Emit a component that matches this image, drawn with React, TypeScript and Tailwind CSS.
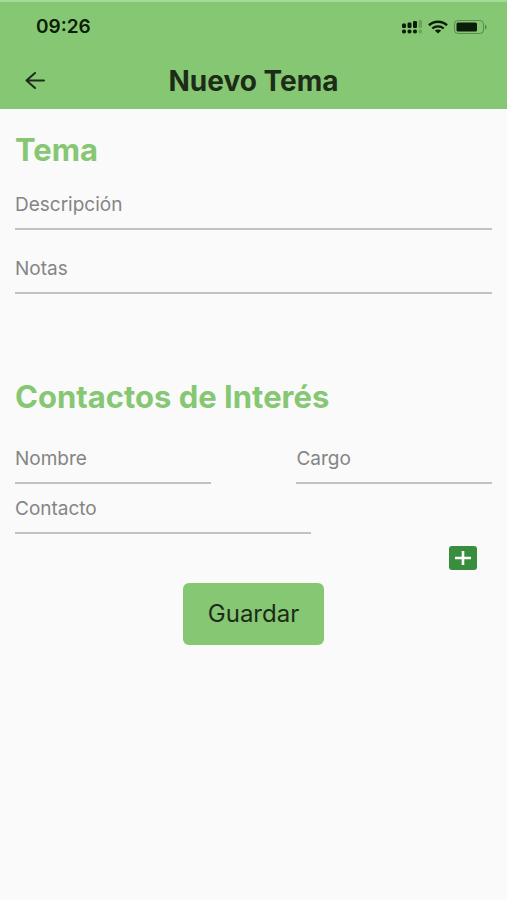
import React from "react";

type FieldProps = {
  name: string;
  label: string;
  className?: string;
};

function Field({ name, label, className = "" }: FieldProps) {
  return (
    <input
      id={name}
      name={name}
      type="text"
      aria-label={label}
      placeholder={label}
      className={`block h-[50px] min-w-0 rounded-none border-b-2 border-[#c2c2c2] bg-transparent text-[19px] text-[#222] outline-none placeholder:text-[#858585] focus:border-[#388e3c] ${className}`}
    />
  );
}

function SignalIcon() {
  return (
    <svg width="20" height="14" viewBox="0 0 20 14" fill="#0b1c08" aria-hidden="true">
      <rect x="0" y="3.500" width="4" height="4.500" rx="1.200" />
      <rect x="5.500" y="2.500" width="4" height="5.500" rx="1.200" />
      <rect x="11" y="1" width="4" height="7" rx="1.200" />
      <rect x="0" y="9.500" width="4" height="4" rx="1.800" />
      <rect x="5.500" y="9.500" width="4" height="4" rx="1.800" />
      <rect x="11" y="9.500" width="4" height="4" rx="1.800" />
      <g opacity="0.2">
        <rect x="16.500" y="0" width="3.500" height="8" rx="1" />
        <rect x="16.500" y="9.500" width="3.500" height="4" rx="1.500" />
      </g>
    </svg>
  );
}

function WifiIcon() {
  return (
    <svg width="20" height="14" viewBox="0 0 20 14" fill="none" stroke="#0b1c08" aria-hidden="true">
      <path d="M1 5.200C6 .6 14 .6 19 5.200" strokeWidth="2.600" />
      <path d="M4.300 8.500c3.200-2.900 8.200-2.900 11.400 0" strokeWidth="2.300" />
      <path d="M6.800 10.600c1.800-1.500 4.600-1.500 6.400 0L10 13.600z" fill="#0b1c08" stroke="none" />
    </svg>
  );
}

function BatteryIcon() {
  return (
    <svg width="33" height="14" viewBox="0 0 33 14" aria-hidden="true">
      <rect x="0.500" y="0.500" width="29" height="13" rx="3.500" fill="none" stroke="#0b1c08" strokeOpacity="0.35" />
      <rect x="2.500" y="2.500" width="20.500" height="9" rx="1.500" fill="#0b1c08" />
      <path d="M31 4.500c2 .8 2 4.200 0 5z" fill="#0b1c08" fillOpacity="0.4" />
    </svg>
  );
}

export default function App() {
  return (
    <div className="min-h-screen bg-[#fafafa] font-['Inter','Liberation_Sans',sans-serif] text-[#1d2b19]">
      <header className="border-t-2 border-[#a5dc95] bg-[#86c773]">
        <div className="flex h-[50px] items-center justify-between pr-5 pl-9">
          <time className="text-[19px] font-semibold text-[#0b1c08]">09:26</time>
          <div className="flex items-center gap-[6px]">
            <SignalIcon />
            <WifiIcon />
            <BatteryIcon />
          </div>
        </div>
        <div className="grid h-[57px] grid-cols-[40px_1fr_40px] items-center px-[15px]">
          <button type="button" aria-label="Volver" className="flex size-10 items-center justify-center">
            <svg width="20" height="18" viewBox="0 0 20 18" fill="none" stroke="#1d2b19" strokeWidth="2" strokeLinecap="round" strokeLinejoin="round" aria-hidden="true">
              <path d="M19 8.500H1.500M10 1L1.500 8.500l8.500 7.500" />
            </svg>
          </button>
          <h1 className="text-center text-[28px] leading-8 font-bold">Nuevo Tema</h1>
        </div>
      </header>

      <form className="px-[15px] pt-[23px]" onSubmit={(event) => event.preventDefault()}>
        <section>
          <h2 className="text-[31px] leading-9 font-bold text-[#86c773]">Tema</h2>
          <Field name="descripcion" label="Descripción" className="mt-3 w-full" />
          <Field name="notas" label="Notas" className="mt-[14px] w-full" />
        </section>

        <section className="mt-[85px]">
          <h2 className="text-[31px] leading-9 font-bold text-[#86c773]">Contactos de Interés</h2>
          <div className="mt-[19px] flex justify-between">
            <Field name="nombre" label="Nombre" className="w-[41%]" />
            <Field name="cargo" label="Cargo" className="w-[41%]" />
          </div>
          <Field name="contacto" label="Contacto" className="w-[62%]" />
        </section>

        <div className="mt-3 flex justify-end pr-[15px]">
          <button type="button" aria-label="Añadir contacto" className="flex h-6 w-7 items-center justify-center rounded-[3px] bg-[#388e3c]">
            <svg width="16" height="14" viewBox="0 0 16 14" stroke="#fff" strokeWidth="2.600" aria-hidden="true">
              <path d="M0 7h16M8 0v14" />
            </svg>
          </button>
        </div>

        <div className="mt-[13px] flex justify-center">
          <button type="submit" className="h-[62px] rounded-md bg-[#86c773] px-[25px] text-2xl">
            Guardar
          </button>
        </div>
      </form>
    </div>
  );
}
